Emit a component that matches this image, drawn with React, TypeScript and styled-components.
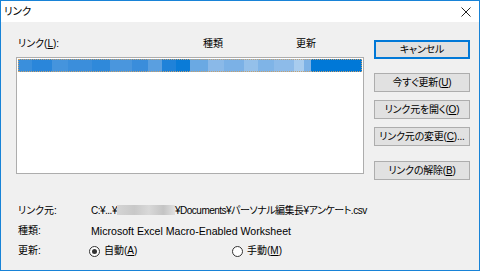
import React from "react";
import styled, { createGlobalStyle } from "styled-components";

const GlobalStyle = createGlobalStyle`
  html, body { margin: 0; padding: 0; background: #f0f0f0; }
  body {
    font-family: "Liberation Sans", "Noto Sans CJK JP", sans-serif;
    font-size: 10px;
    font-feature-settings: "palt";
    color: #000;
  }
`;

const Window = styled.div`
  width: 480px;
  height: 271px;
  box-sizing: border-box;
  border: 1px solid #1883d7;
  background: #f0f0f0;
  display: flex;
  flex-direction: column;
  overflow: hidden;
`;

const TitleBar = styled.div`
  height: 21px;
  background: #fff;
  display: flex;
  align-items: center;
  justify-content: space-between;
  padding: 0 8px 0 3px;
  font-size: 10.5px;
  line-height: 21px;
`;

const Body = styled.div`
  flex: 1;
  padding: 15px 9px 0 15px;
  display: flex;
  flex-direction: column;
`;

const Top = styled.div`
  display: flex;
  gap: 10px;
`;

const LeftCol = styled.div`
  width: 348px;
  display: flex;
  flex-direction: column;
`;

const Header = styled.div`
  height: 20px;
  line-height: 14px;
  display: grid;
  grid-template-columns: 185px 93px 1fr;
  padding-left: 2px;
`;

const ListBox = styled.div`
  height: 117px;
  box-sizing: border-box;
  border: 1px solid #adadad;
  background: #fff;
  padding: 1px;
`;

const SelectedRow = styled.div`
  height: 13px;
  background: #0078d7;
  outline: 1px dotted #c9a06b;
  outline-offset: -1px;
  display: flex;
  overflow: hidden;
`;

const Blur = styled.span<{ $shade: string; $w: number }>`
  width: ${({ $w }) => $w}px;
  height: 100%;
  background: ${({ $shade }) => $shade};
`;

const RightCol = styled.div`
  width: 96px;
  padding-top: 3px;
  display: flex;
  flex-direction: column;
`;

const Button = styled.div<{ $default?: boolean; $gap: number }>`
  height: 19px;
  box-sizing: border-box;
  margin-bottom: ${({ $gap }) => $gap}px;
  background: #e1e1e1;
  border: ${({ $default }) => ($default ? "2px solid #0078d7" : "1px solid #adadad")};
  display: flex;
  align-items: center;
  justify-content: center;
  line-height: 1;
  letter-spacing: -0.2px;
  white-space: nowrap;
`;

const Info = styled.div`
  margin-top: 21px;
  display: flex;
  flex-direction: column;
  padding-left: 2px;
`;

const InfoRow = styled.div`
  height: 20px;
  line-height: 20px;
  display: flex;
  white-space: nowrap;
`;

const Label = styled.span`
  width: 73px;
`;

const Value = styled.span<{ $size?: number; $spacing?: number }>`
  font-size: ${({ $size }) => $size ?? 10}px;
  letter-spacing: ${({ $spacing }) => $spacing ?? 0}px;
`;

const Masked = styled.span`
  display: inline-block;
  width: 58px;
  height: 10px;
  vertical-align: -1px;
  background: linear-gradient(90deg, #d4d4d4 0%, #c8c8c8 30%, #d8d8d8 55%, #c4c4c4 80%, #e0e0e0 100%);
`;

const Radio = styled.label<{ $width?: number }>`
  display: flex;
  align-items: center;
  gap: 4px;
  width: ${({ $width }) => ($width ? `${$width}px` : "auto")};
  margin-left: -2px;
`;

const RadioDot = styled.span<{ $checked?: boolean }>`
  width: 11px;
  height: 11px;
  box-sizing: border-box;
  border: 1px solid #333;
  border-radius: 50%;
  background: #fff;
  display: flex;
  align-items: center;
  justify-content: center;
  &::after {
    content: "";
    width: 5px;
    height: 5px;
    border-radius: 50%;
    background: ${({ $checked }) => ($checked ? "#333" : "transparent")};
  }
`;

const U = styled.span`
  text-decoration: underline;
`;

const blurs: [string, number][] = [
  ["#3a8fdc", 14], ["#2a86da", 20], ["#4594dd", 16], ["#3b8edb", 24], ["#2f89da", 18],
  ["#4a96dd", 22], ["#3a8ddb", 16], ["#5a9fe0", 14], ["#1f82d9", 14], ["#0a7bd7", 14],
  ["#6aa9e3", 18], ["#8ab9e8", 16], ["#7bb1e6", 20], ["#94c0ea", 14], ["#7fb4e7", 16],
  ["#8dbbe9", 20], ["#a8ccee", 10], ["#7db2e6", 7],
];

const CloseIcon = () => (
  <svg width="10" height="10" viewBox="0 0 10 10">
    <path d="M0.5 0.5 L9.5 9.5 M9.5 0.5 L0.5 9.5" stroke="#222" strokeWidth="1" fill="none" />
  </svg>
);

export default function App() {
  return (
    <>
      <GlobalStyle />
      <Window>
        <TitleBar>
          <span>リンク</span>
          <CloseIcon />
        </TitleBar>
        <Body>
          <Top>
            <LeftCol>
              <Header>
                <span>リンク(<U>L</U>):</span>
                <span>種類</span>
                <span>更新</span>
              </Header>
              <ListBox>
                <SelectedRow>
                  {blurs.map(([c, w], i) => (
                    <Blur key={i} $shade={c} $w={w} />
                  ))}
                </SelectedRow>
              </ListBox>
            </LeftCol>
            <RightCol>
              <Button $default $gap={14}>キャンセル</Button>
              <Button $gap={8}>今すぐ更新(<U>U</U>)</Button>
              <Button $gap={8}>リンク元を開く(<U>O</U>)</Button>
              <Button $gap={15}>リンク元の変更(<U>C</U>)...</Button>
              <Button $gap={0}>リンクの解除(<U>B</U>)</Button>
            </RightCol>
          </Top>
          <Info>
            <InfoRow>
              <Label>リンク元:</Label>
              <Value $spacing={-0.5}>
                C:¥...¥<Masked />¥Documents¥パーソナル編集長¥アンケート.csv
              </Value>
            </InfoRow>
            <InfoRow>
              <Label>種類:</Label>
              <Value $size={10.6}>Microsoft Excel Macro-Enabled Worksheet</Value>
            </InfoRow>
            <InfoRow>
              <Label>更新:</Label>
              <Radio $width={145}>
                <RadioDot $checked />
                <span>自動(<U>A</U>)</span>
              </Radio>
              <Radio>
                <RadioDot />
                <span>手動(<U>M</U>)</span>
              </Radio>
            </InfoRow>
          </Info>
        </Body>
      </Window>
    </>
  );
}
